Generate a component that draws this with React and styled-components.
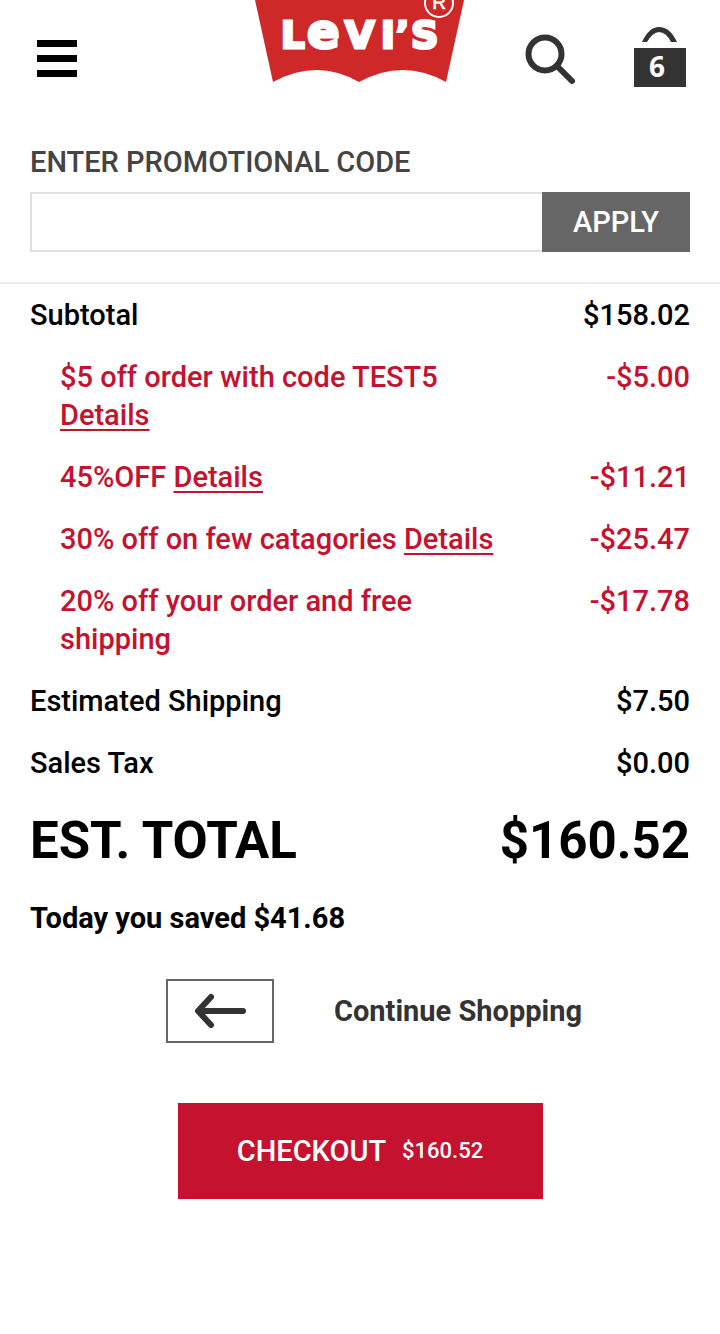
import React, { useState } from "react";
import styled, { createGlobalStyle } from "styled-components";

const discounts = [
  { label: "$5 off order with code TEST5", amount: "-$5.00", details: true },
  { label: "45%OFF", amount: "-$11.21", details: true },
  { label: "30% off on few catagories", amount: "-$25.47", details: true },
  { label: "20% off your order and free shipping", amount: "-$17.78" },
];

const Logo = () => (
  <svg width="210" height="84" viewBox="0 0 210 84" role="img" aria-label="Levi's">
    <path
      d="M0 0H209L191 82Q148 58 104 82Q62 58 18 82Z"
      fill="#ce2829"
    />
    <g
      fill="#fff"
      stroke="#fff"
      strokeWidth="3"
      fontFamily="'DejaVu Sans', sans-serif"
      fontWeight="700"
      fontSize="37"
    >
      <text x="26" y="48">L</text>
      <text x="52" y="48" fontSize="48">e</text>
      <text x="90" y="48" fontSize="38">V</text>
      <text x="126" y="48">I</text>
      <text x="141" y="46" fontSize="34">’</text>
      <text x="156" y="48" fontSize="38">S</text>
    </g>
    <circle cx="184" cy="3" r="14" fill="none" stroke="#fff" strokeWidth="2" />
    <text
      x="184"
      y="9"
      fill="#fff"
      stroke="#fff"
      strokeWidth="0.6"
      textAnchor="middle"
      fontFamily="'Liberation Sans', sans-serif"
      fontSize="19"
    >
      R
    </text>
  </svg>
);

const SearchIcon = () => (
  <svg width="52" height="54" viewBox="0 0 52 54" fill="none" stroke="#333">
    <circle cx="20" cy="20" r="16.5" strokeWidth="6" />
    <path d="M33 33L47 47" strokeWidth="6" strokeLinecap="round" />
  </svg>
);

const BagIcon = ({ count }) => (
  <svg width="54" height="62" viewBox="0 0 54 62">
    <path
      d="M9 16Q16 1 26 1Q37 1 44 16H38Q33 6 26 6Q20 6 14 16Z"
      fill="#333"
    />
    <rect x="1" y="22" width="52" height="39" fill="#333" />
    <text
      x="24"
      y="51"
      fill="#fff"
      textAnchor="middle"
      fontFamily="'Open Sans', 'Noto Sans', sans-serif"
      fontWeight="700"
      fontSize="28"
    >
      {count}
    </text>
  </svg>
);

const ArrowIcon = () => (
  <svg width="54" height="36" viewBox="0 0 54 36" fill="none" stroke="#333">
    <path
      d="M18 4L5 18L18 32M6 18H50"
      strokeWidth="6"
      strokeLinecap="round"
      strokeLinejoin="round"
    />
  </svg>
);

const App = () => {
  const [code, setCode] = useState("");

  return (
    <>
      <GlobalStyle />
      <Header>
        <MenuButton type="button" aria-label="Menu">
          <Bar />
          <Bar />
          <Bar />
        </MenuButton>
        <LogoLink href="#home">
          <Logo />
        </LogoLink>
        <Tools>
          <IconButton type="button" aria-label="Search">
            <SearchIcon />
          </IconButton>
          <BagLink href="#bag" aria-label="Shopping bag">
            <BagIcon count={6} />
          </BagLink>
        </Tools>
      </Header>

      <PromoForm onSubmit={(e) => e.preventDefault()}>
        <PromoLabel htmlFor="promo">ENTER PROMOTIONAL CODE</PromoLabel>
        <PromoField>
          <PromoInput
            id="promo"
            type="text"
            value={code}
            onChange={(e) => setCode(e.target.value)}
          />
          <ApplyButton type="submit">APPLY</ApplyButton>
        </PromoField>
      </PromoForm>

      <Summary>
        <Row>
          <Term>Subtotal</Term>
          <Amount>$158.02</Amount>
        </Row>
        {discounts.map(({ label, amount, details }) => (
          <Row key={label} $discount>
            <Term>
              {label} {details && <a href="#details">Details</a>}
            </Term>
            <Amount>{amount}</Amount>
          </Row>
        ))}
        <Row>
          <Term>Estimated Shipping</Term>
          <Amount>$7.50</Amount>
        </Row>
        <Row>
          <Term>Sales Tax</Term>
          <Amount>$0.00</Amount>
        </Row>
        <TotalRow>
          <Term>EST. TOTAL</Term>
          <Amount>$160.52</Amount>
        </TotalRow>
      </Summary>
      <Saved>Today you saved $41.68</Saved>

      <Actions>
        <ContinueLink href="#shop">
          <ArrowBox>
            <ArrowIcon />
          </ArrowBox>
          Continue Shopping
        </ContinueLink>
        <CheckoutButton type="button">
          CHECKOUT <small>$160.52</small>
        </CheckoutButton>
      </Actions>
    </>
  );
};

export default App;

const GlobalStyle = createGlobalStyle`
  * {
    box-sizing: border-box;
  }
  body {
    margin: 0;
    background: #fff;
    color: #000;
    font: 500 29px/38px Roboto, "Liberation Sans", sans-serif;
  }
  button, input {
    font: inherit;
  }
  svg {
    display: block;
  }
`;

const Header = styled.header`
  display: grid;
  grid-template-columns: 1fr auto 1fr;
  align-items: start;
  height: 143px;
  padding: 0 33px;
`;

const MenuButton = styled.button`
  display: grid;
  gap: 8px;
  width: 40px;
  margin: 40px 0 0 4px;
  padding: 0;
  border: 0;
  background: none;
  cursor: pointer;
`;

const Bar = styled.span`
  height: 7px;
  background: #000;
`;

const LogoLink = styled.a`
  display: block;
`;

const Tools = styled.div`
  display: flex;
  justify-content: flex-end;
  align-items: flex-end;
  gap: 56px;
  padding-top: 26px;
`;

const IconButton = styled.button`
  padding: 0;
  border: 0;
  background: none;
  cursor: pointer;
`;

const BagLink = styled.a`
  display: block;
`;

const PromoForm = styled.form`
  padding: 0 30px 30px;
  border-bottom: 2px solid #ececec;
`;

const PromoLabel = styled.label`
  display: block;
  margin-bottom: 11px;
  color: #444;
`;

const PromoField = styled.div`
  display: flex;
  height: 60px;
`;

const PromoInput = styled.input`
  flex: 1;
  min-width: 0;
  padding: 0 16px;
  border: 2px solid #e1e1e1;
  border-right: 0;
  border-radius: 0;
  background: #fff;
`;

const ApplyButton = styled.button`
  width: 148px;
  padding: 0;
  border: 0;
  background: #666;
  color: #fff;
  cursor: pointer;
`;

const Summary = styled.dl`
  margin: 0;
  padding: 0 30px;
`;

const Row = styled.div`
  display: flex;
  justify-content: space-between;
  gap: 80px;
  padding: 12px 0;
  padding-left: ${({ $discount }) => ($discount ? "30px" : "0")};
  color: ${({ $discount }) => ($discount ? "#c4122f" : "#000")};
  & a {
    color: inherit;
    text-underline-offset: 4px;
    text-decoration-thickness: 2px;
  }
`;

const TotalRow = styled(Row)`
  padding: 16px 0;
  font-size: 51px;
  line-height: 62px;
  font-weight: 700;
`;

const Term = styled.dt``;

const Amount = styled.dd`
  margin: 0;
  white-space: nowrap;
`;

const Saved = styled.p`
  margin: 0;
  padding: 11px 30px 0;
  font-weight: 700;
`;

const Actions = styled.div`
  display: flex;
  flex-direction: column;
  align-items: center;
  gap: 60px;
  padding: 42px 30px;
`;

const ContinueLink = styled.a`
  display: flex;
  align-items: center;
  gap: 60px;
  padding-left: 28px;
  color: #333;
  font-weight: 700;
  text-decoration: none;
`;

const ArrowBox = styled.span`
  display: grid;
  place-items: center;
  width: 108px;
  height: 64px;
  border: 2px solid #666;
`;

const CheckoutButton = styled.button`
  display: flex;
  justify-content: center;
  align-items: center;
  gap: 16px;
  min-width: 365px;
  height: 96px;
  padding: 0 30px;
  border: 0;
  background: #c4122f;
  color: #fff;
  cursor: pointer;
  & small {
    font-size: 22px;
  }
`;
